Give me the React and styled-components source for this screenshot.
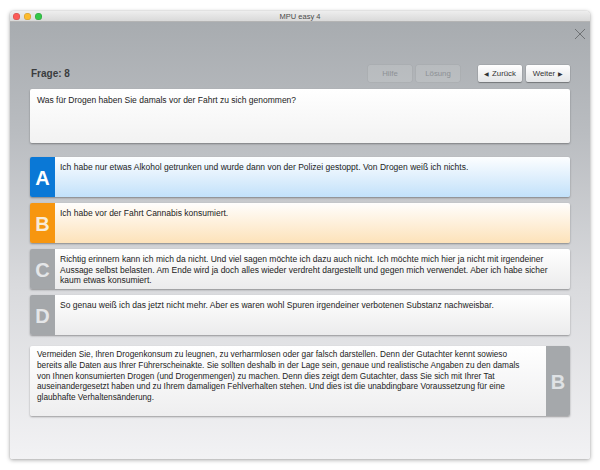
import React from "react";
import styled, { createGlobalStyle } from "styled-components";

const Global = createGlobalStyle`
  html, body { margin: 0; padding: 0; background: #ffffff; }
  body { font-family: "Liberation Sans", Arial, sans-serif; }
  * { box-sizing: border-box; }
`;

const Page = styled.div`
  width: 600px;
  height: 470px;
  padding: 11px 10px 0 10px;
`;

const Window = styled.div`
  width: 580px;
  height: 448px;
  border-radius: 4px 4px 2px 2px;
  overflow: hidden;
  display: flex;
  flex-direction: column;
  box-shadow: 0 1px 4px rgba(0, 0, 0, 0.35), 0 0 1px rgba(0, 0, 0, 0.3);
`;

const TitleBar = styled.div`
  height: 11px;
  flex: 0 0 11px;
  position: relative;
  display: flex;
  align-items: center;
  justify-content: center;
  background: linear-gradient(#eeeeee, #d9d9d9);
  border-bottom: 1px solid #b4b4b4;
`;

const Lights = styled.div`
  position: absolute;
  left: 3px;
  top: 2px;
  display: flex;
  gap: 4px;
`;

const Light = styled.span`
  width: 7px;
  height: 7px;
  border-radius: 50%;
  background: ${(p) => p.$c};
  box-shadow: inset 0 0 0 0.5px rgba(0, 0, 0, 0.2);
`;

const Title = styled.span`
  font-size: 7.5px;
  color: #4a4a4a;
  line-height: 11px;
`;

const Body = styled.div`
  flex: 1;
  display: flex;
  flex-direction: column;
  background: linear-gradient(#a8acb0 0%, #b9bcc0 25%, #d9dadd 60%, #f2f2f4 100%);
`;

const CloseRow = styled.div`
  display: flex;
  justify-content: flex-end;
  padding: 6px 4px 0 0;
  height: 17px;
`;

const Content = styled.div`
  padding: 0 20px;
  display: flex;
  flex-direction: column;
`;

const Toolbar = styled.div`
  margin-top: 26px;
  height: 17px;
  display: flex;
  align-items: center;
`;

const FrageLabel = styled.div`
  font-size: 10px;
  font-weight: bold;
  color: #3a3c3e;
  padding-left: 1px;
  flex: 1;
`;

const ButtonGroup = styled.div`
  display: flex;
  gap: 4px;
  margin-left: ${(p) => p.$ml || 0}px;
`;

const Button = styled.div`
  width: 44px;
  height: 17px;
  border-radius: 2px;
  display: flex;
  align-items: center;
  justify-content: center;
  gap: 3px;
  font-size: 7.8px;
  color: ${(p) => (p.$disabled ? "#8d9195" : "#333")};
  background: ${(p) =>
    p.$disabled ? "rgba(255,255,255,0.12)" : "linear-gradient(#ffffff, #e4e5e7)"};
  box-shadow: ${(p) =>
    p.$disabled
      ? "0 0 0 0.5px rgba(0,0,0,0.06)"
      : "0 1px 1px rgba(0,0,0,0.3), 0 0 0 0.5px rgba(0,0,0,0.12)"};
`;

const Arrow = styled.span`
  font-size: 6px;
  line-height: 1;
  color: #333;
`;

const QuestionBox = styled.div`
  margin-top: 7px;
  height: 54px;
  border-radius: 2px;
  background: linear-gradient(#ffffff, #f2f2f2);
  box-shadow: 0 1px 2px rgba(0, 0, 0, 0.35);
  padding: 6px 7px;
  font-size: 8.5px;
  line-height: 11px;
  color: #222;
`;

const Answers = styled.div`
  margin-top: 14px;
  display: flex;
  flex-direction: column;
  gap: 6px;
`;

const themes = {
  A: { badge: "#0a78d6", letter: "#ffffff", from: "#fdfeff", to: "#c2e1fa" },
  B: { badge: "#f7960f", letter: "#f9ebd8", from: "#fffefd", to: "#fde2b9" },
  C: { badge: "#a4a7aa", letter: "#e4e6e8", from: "#ffffff", to: "#ebebec" },
  D: { badge: "#a4a7aa", letter: "#e4e6e8", from: "#ffffff", to: "#ebebec" },
};

const AnswerRow = styled.div`
  height: 40px;
  display: flex;
  border-radius: 2px;
  overflow: hidden;
  box-shadow: 0 1px 2px rgba(0, 0, 0, 0.35);
`;

const Badge = styled.div`
  flex: 0 0 ${(p) => p.$w || 25}px;
  background: ${(p) => p.$bg};
  color: ${(p) => p.$fg};
  font-size: 20px;
  font-weight: bold;
  display: flex;
  align-items: center;
  justify-content: center;
  padding-top: 2px;
`;

const AnswerText = styled.div`
  flex: 1;
  background: linear-gradient(${(p) => p.$from}, ${(p) => p.$to});
  padding: 5px 5px;
  font-size: 8.5px;
  line-height: 10.6px;
  color: #222;
  white-space: nowrap;
`;

const HintBox = styled.div`
  margin-top: 11px;
  height: 70px;
  display: flex;
  border-radius: 2px;
  overflow: hidden;
  box-shadow: 0 1px 2px rgba(0, 0, 0, 0.35);
`;

const HintText = styled.div`
  flex: 1;
  background: linear-gradient(#ffffff, #eeeeef);
  padding: 4px 7px;
  font-size: 8.25px;
  line-height: 10.8px;
  color: #222;
  white-space: nowrap;
`;

const Lines = ({ lines }) =>
  lines.map((l, i) => (
    <React.Fragment key={i}>
      {l}
      {i < lines.length - 1 && <br />}
    </React.Fragment>
  ));

const answers = [
  {
    k: "A",
    lines: [
      "Ich habe nur etwas Alkohol getrunken und wurde dann von der Polizei gestoppt. Von Drogen weiß ich nichts.",
    ],
  },
  { k: "B", lines: ["Ich habe vor der Fahrt Cannabis konsumiert."] },
  {
    k: "C",
    lines: [
      "Richtig erinnern kann ich mich da nicht. Und viel sagen möchte ich dazu auch nicht. Ich möchte mich hier ja nicht mit irgendeiner",
      "Aussage selbst belasten. Am Ende wird ja doch alles wieder verdreht dargestellt und gegen mich verwendet. Aber ich habe sicher",
      "kaum etwas konsumiert.",
    ],
  },
  {
    k: "D",
    lines: [
      "So genau weiß ich das jetzt nicht mehr. Aber es waren wohl Spuren irgendeiner verbotenen Substanz nachweisbar.",
    ],
  },
];

const hint = [
  "Vermeiden Sie, Ihren Drogenkonsum zu leugnen, zu verharmlosen oder gar falsch darstellen. Denn der Gutachter kennt sowieso",
  "bereits alle Daten aus Ihrer Führerscheinakte. Sie sollten deshalb in der Lage sein, genaue und realistische Angaben zu den damals",
  "von Ihnen konsumierten Drogen (und Drogenmengen) zu machen. Denn dies zeigt dem Gutachter, dass Sie sich mit Ihrer Tat",
  "auseinandergesetzt haben und zu Ihrem damaligen Fehlverhalten stehen. Und dies ist die unabdingbare Voraussetzung für eine",
  "glaubhafte Verhaltensänderung.",
];

const CloseIcon = () => (
  <svg width="12" height="12" viewBox="0 0 12 12">
    <path d="M1 1 L11 11 M11 1 L1 11" stroke="#6f7275" strokeWidth="1" fill="none" />
  </svg>
);

export default function App() {
  return (
    <Page>
      <Global />
      <Window>
        <TitleBar>
          <Lights>
            <Light $c="#fc5b57" />
            <Light $c="#fdbb2e" />
            <Light $c="#33c748" />
          </Lights>
          <Title>MPU easy 4</Title>
        </TitleBar>
        <Body>
          <CloseRow>
            <CloseIcon />
          </CloseRow>
          <Content>
            <Toolbar>
              <FrageLabel>Frage: 8</FrageLabel>
              <ButtonGroup>
                <Button $disabled>Hilfe</Button>
                <Button $disabled>Lösung</Button>
              </ButtonGroup>
              <ButtonGroup $ml={18}>
                <Button>
                  <Arrow>◀</Arrow>Zurück
                </Button>
                <Button>
                  Weiter<Arrow>▶</Arrow>
                </Button>
              </ButtonGroup>
            </Toolbar>
            <QuestionBox>Was für Drogen haben Sie damals vor der Fahrt zu sich genommen?</QuestionBox>
            <Answers>
              {answers.map((a) => {
                const t = themes[a.k];
                return (
                  <AnswerRow key={a.k}>
                    <Badge $bg={t.badge} $fg={t.letter}>
                      {a.k}
                    </Badge>
                    <AnswerText $from={t.from} $to={t.to}>
                      <Lines lines={a.lines} />
                    </AnswerText>
                  </AnswerRow>
                );
              })}
            </Answers>
            <HintBox>
              <HintText>
                <Lines lines={hint} />
              </HintText>
              <Badge $w={24} $bg="#a5a8ab" $fg="#dfe2e5">
                B
              </Badge>
            </HintBox>
          </Content>
        </Body>
      </Window>
    </Page>
  );
}
